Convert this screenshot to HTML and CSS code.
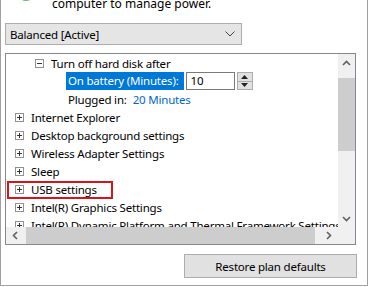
FILE: index.html
```html
<!DOCTYPE html>
<html>
<head>
<meta charset="utf-8">
<link rel="stylesheet" href="styles.css">
</head>
<body>
<div class="window">
  <div class="header">
    <div class="logo"></div>
    <div class="desc">computer to manage power.</div>
  </div>
  <div class="select">
    <span>Balanced [Active]</span>
    <svg class="chev" width="10" height="6" viewBox="0 0 10 6"><path d="M0.5 0.5 L5 5 L9.5 0.5" fill="none" stroke="#444" stroke-width="1"/></svg>
  </div>
  <div class="tree">
    <div class="viewport">
      <div class="list">
        <div class="row lvl1"><span class="box minus"></span><span class="label">Turn off hard disk after</span></div>
        <div class="row lvl2">
          <span class="label sel">On battery (Minutes):</span>
          <span class="spin-input">10</span>
          <span class="spin-btns">
            <span class="sb up"><svg width="7" height="4" viewBox="0 0 7 4"><path d="M0 4 L3.5 0 L7 4Z" fill="#222"/></svg></span>
            <span class="sb down"><svg width="7" height="4" viewBox="0 0 7 4"><path d="M0 0 L3.5 4 L7 0Z" fill="#222"/></svg></span>
          </span>
        </div>
        <div class="row lvl2"><span class="label">Plugged in:</span><span class="link">20 Minutes</span></div>
        <div class="row lvl0"><span class="box plus"></span><span class="label">Internet Explorer</span></div>
        <div class="row lvl0"><span class="box plus"></span><span class="label">Desktop background settings</span></div>
        <div class="row lvl0"><span class="box plus"></span><span class="label">Wireless Adapter Settings</span></div>
        <div class="row lvl0"><span class="box plus"></span><span class="label">Sleep</span></div>
        <div class="row lvl0 hl"><span class="box plus"></span><span class="label">USB settings</span><span class="redbox"></span></div>
        <div class="row lvl0"><span class="box plus"></span><span class="label">Intel(R) Graphics Settings</span></div>
        <div class="row lvl0"><span class="box plus"></span><span class="label">Intel(R) Dynamic Platform and Thermal Framework Settings</span></div>
      </div>
    </div>
    <div class="vscroll">
      <div class="vbtn"><svg width="9" height="6" viewBox="0 0 9 6"><path d="M1 5 L4.5 1.5 L8 5" fill="none" stroke="#606060" stroke-width="1.6"/></svg></div>
      <div class="vthumb"></div>
      <div class="vrest"></div>
      <div class="vbtn"><svg width="9" height="6" viewBox="0 0 9 6"><path d="M1 1 L4.5 4.5 L8 1" fill="none" stroke="#606060" stroke-width="1.6"/></svg></div>
    </div>
    <div class="hscroll">
      <svg class="arr" width="6" height="9" viewBox="0 0 6 9"><path d="M5 1 L1.5 4.5 L5 8" fill="none" stroke="#606060" stroke-width="1.6"/></svg>
      <div class="hthumb"></div>
      <svg class="arr" width="6" height="9" viewBox="0 0 6 9"><path d="M1 1 L4.5 4.5 L1 8" fill="none" stroke="#606060" stroke-width="1.6"/></svg>
    </div>
    <div class="corner"></div>
  </div>
  <div class="footer">
    <div class="button">Restore plan defaults</div>
  </div>
</div>
</body>
</html>
```
FILE: styles.css
```css
html, body {
  margin: 0;
  padding: 0;
  background: #fff;
}
body {
  width: 369px;
  height: 287px;
  overflow: hidden;
  font-family: "Noto Sans", "Liberation Sans", sans-serif;
  font-size: 11.5px;
  letter-spacing: -0.2px;
  color: #000;
}
.window {
  box-sizing: border-box;
  width: 368px;
  height: 286px;
  border-left: 1px solid #a0a0a0;
  border-right: 1px solid #a0a0a0;
  border-bottom: 1px solid #a0a0a0;
  background: #fff;
  overflow: hidden;
}
.header {
  display: flex;
  align-items: flex-end;
  height: 10px;
  margin-top: -2px;
  padding-left: 16px;
  gap: 17px;
}
.logo {
  width: 18px;
  height: 18px;
  border-radius: 50%;
  background: radial-gradient(circle at 50% 30%, #a6dca0, #5dae54);
  margin-bottom: 7px;
  flex: none;
}
.desc {
  font-size: 12px;
  letter-spacing: 0;
  line-height: 14px;
  margin-bottom: -3px;
}
.select {
  box-sizing: border-box;
  margin: 15px 0 0 4px;
  width: 237px;
  height: 22px;
  border: 1px solid #adadad;
  background: #e5e5e5;
  display: flex;
  align-items: center;
  justify-content: space-between;
  padding: 0 6px 0 4px;
}
.chev { flex: none; }
.tree {
  box-sizing: border-box;
  margin: 8px 0 0 4px;
  width: 351px;
  height: 192px;
  border: 1px solid #828790;
  display: grid;
  grid-template-columns: 1fr 17px;
  grid-template-rows: 1fr 17px;
}
.viewport {
  overflow: hidden;
  position: relative;
}
.list {
  margin-top: 0;
  white-space: nowrap;
}
.row {
  height: 18px;
  display: flex;
  align-items: center;
  position: relative;
}
.lvl0 { padding-left: 9px; }
.lvl1 { padding-left: 29px; }
.lvl2 { padding-left: 62px; }
.box {
  box-sizing: border-box;
  width: 9px;
  height: 9px;
  border: 1px solid #919191;
  position: relative;
  flex: none;
  margin-right: 7px;
}
.box::before {
  content: "";
  position: absolute;
  left: 1px;
  top: 3px;
  width: 5px;
  height: 1px;
  background: #333;
}
.plus::after {
  content: "";
  position: absolute;
  left: 3px;
  top: 1px;
  width: 1px;
  height: 5px;
  background: #333;
}
.sel {
  background: #0078d7;
  color: #fff;
  height: 18px;
  line-height: 18px;
  padding: 0 5px 0 2px;
  margin-left: -2px;
}
.spin-input {
  box-sizing: border-box;
  width: 49px;
  height: 18px;
  border: 1px solid #7a7a7a;
  margin-left: 2px;
  padding-left: 4px;
  line-height: 16px;
  background: #fff;
}
.spin-btns {
  box-sizing: border-box;
  margin-left: 2px;
  width: 16px;
  height: 18px;
  border: 1px solid #adadad;
  display: flex;
  flex-direction: column;
  background: #e1e1e1;
}
.sb {
  flex: 1;
  display: flex;
  align-items: center;
  justify-content: center;
}
.sb.up { border-bottom: 1px solid #adadad; }
.link {
  color: #0066cc;
  margin-left: 6px;
}
.redbox {
  position: absolute;
  left: 1px;
  top: 1px;
  width: 102px;
  height: 14px;
  border: 2px solid #d7141a;
}
.vscroll {
  background: #f0f0f0;
  display: flex;
  flex-direction: column;
}
.vbtn {
  height: 17px;
  flex: none;
  display: flex;
  align-items: center;
  justify-content: center;
}
.vthumb {
  height: 73px;
  background: #cdcdcd;
  margin-top: 7px;
}
.vrest { flex: 1; }
.hscroll {
  background: #f0f0f0;
  display: flex;
  align-items: center;
}
.hscroll .arr {
  flex: none;
  margin: 0 6px;
}
.hthumb {
  flex: 1;
  height: 17px;
  background: #cdcdcd;
  margin-left: 2px;
  margin-right: 5px;
}
.corner {
  background: #f0f0f0;
}
.footer {
  display: flex;
  justify-content: flex-end;
  padding: 9px 10px 0 0;
}
.button {
  box-sizing: border-box;
  width: 173px;
  height: 24px;
  border: 1px solid #adadad;
  background: #e1e1e1;
  display: flex;
  align-items: center;
  justify-content: center;
}
```
